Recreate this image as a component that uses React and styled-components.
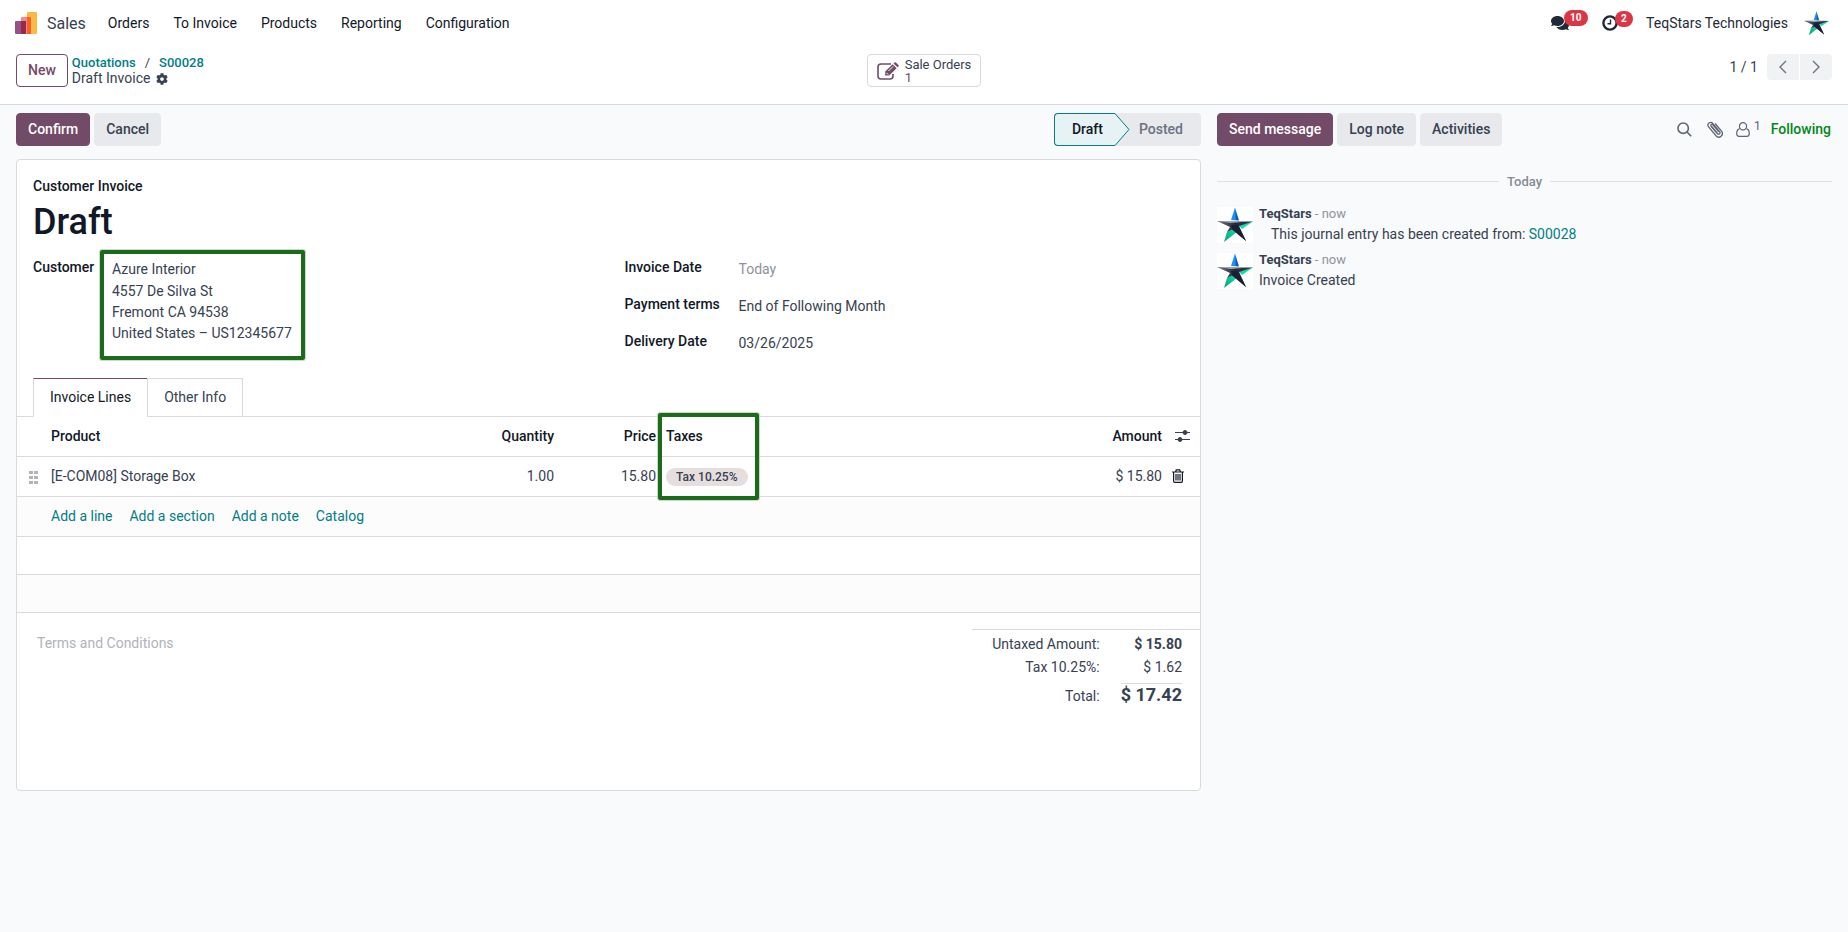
import React from 'react';
import styled, { createGlobalStyle } from 'styled-components';
import { FaCog, FaComments } from 'react-icons/fa';

const GlobalStyle = createGlobalStyle`
  * {
    box-sizing: border-box;
  }

  body {
    margin: 0;
    background-color: #f9fafb;
    color: #374151;
    font-family: Roboto, "Noto Sans", sans-serif;
    font-size: 14px;
    line-height: 21px;
  }

  button, input, textarea {
    font: inherit;
    color: inherit;
  }

  a {
    color: #017e84;
    text-decoration: none;
  }
`;

const Header = styled.header`
  background-color: #fff;
  border-bottom: 1px solid #d8dadd;
`;

const Navbar = styled.nav`
  display: flex;
  align-items: center;
  height: 46px;
  padding: 0 19px 0 15px;
`;

const AppName = styled.a`
  display: flex;
  align-items: center;
  gap: 10px;
  margin-right: 22px;
  font-size: 16px;
  color: #374151;
`;

const Menu = styled.div`
  display: flex;
  gap: 24px;
`;

const MenuItem = styled.a`
  color: #111827;
`;

const Systray = styled.div`
  display: flex;
  align-items: center;
  margin-left: auto;
  color: #1f2937;
`;

const TrayButton = styled.button`
  position: relative;
  display: flex;
  align-items: center;
  margin-right: ${({ space }) => space}px;
  padding: 0;
  border: 0;
  background: none;
`;

const Counter = styled.span`
  position: absolute;
  left: 13px;
  top: -4px;
  min-width: 16px;
  height: 16px;
  padding: 0 6px;
  border-radius: 8px;
  background-color: #dc3545;
  color: #fff;
  font-size: 10px;
  font-weight: 700;
  line-height: 16px;
`;

const Company = styled.span`
  margin-right: 16px;
`;

const ControlPanel = styled.div`
  display: grid;
  grid-template-columns: 1fr auto 1fr;
  align-items: start;
  padding: 8px 16px 17px;
`;

const PanelStart = styled.div`
  display: flex;
  gap: 4px;
`;

const Button = styled.button`
  height: 33px;
  padding: 0 11px;
  border: 1px solid ${({ kind }) => (kind === 'plain' ? '#e7e9ed' : '#714b67')};
  border-radius: 4px;
  background-color: ${({ kind }) => ({ primary: '#714b67', outline: '#fff', plain: '#e7e9ed' }[kind])};
  color: ${({ kind }) => ({ primary: '#fff', outline: '#714b67', plain: '#374151' }[kind])};
  font-weight: 500;
  white-space: nowrap;
`;

const Breadcrumb = styled.div`
  display: flex;
  flex-direction: column;
`;

const Crumbs = styled.div`
  display: flex;
  gap: 9px;
  font-size: 13px;
  line-height: 17px;
  
  a {
    font-weight: 500;
  }
`;

const CurrentCrumb = styled.div`
  display: flex;
  align-items: center;
  gap: 6px;
  line-height: 15px;
`;

const StatButton = styled.button`
  display: flex;
  align-items: center;
  gap: 6px;
  height: 33px;
  padding: 0 9px;
  border: 1px solid #d8dadd;
  border-radius: 4px;
  background-color: #fff;
  text-align: left;
`;

const StatText = styled.span`
  display: flex;
  flex-direction: column;
  font-size: 13px;
  line-height: 13px;
`;

const StatValue = styled.span`
  color: #714b67;
`;

const Pager = styled.div`
  display: flex;
  align-items: center;
  justify-content: flex-end;
  gap: 1px;
`;

const PagerCount = styled.span`
  margin-right: 8px;
`;

const PagerButton = styled.button`
  display: flex;
  align-items: center;
  justify-content: center;
  width: 32px;
  height: 26px;
  padding: 0;
  border: 0;
  border-radius: ${({ side }) => (side === 'left' ? '4px 0 0 4px' : '0 4px 4px 0')};
  background-color: #f1f2f4;
  color: #6b7280;
`;

const Content = styled.div`
  display: grid;
  grid-template-columns: 1185fr 615fr;
  align-items: start;
  gap: 16px;
  padding: 8px 16px;
`;

const Bar = styled.div`
  display: flex;
  align-items: center;
  gap: 4px;
`;

const StatusBar = styled.div`
  display: flex;
  margin-left: auto;
`;

const Status = styled.button`
  position: relative;
  height: 33px;
  padding: 0 18px 0 24px;
  border: 0;
  border-radius: 0 4px 4px 0;
  background-color: #e7e9ed;
  color: #6b7280;
  font-weight: 500;
`;

const ActiveStatus = styled(Status)`
  padding: 0 12px 0 17px;
  border: 1px solid #017e84;
  border-right: 0;
  border-radius: 4px 0 0 4px;
  background-color: #e6f2f3;
  color: #111827;
  z-index: 1;

  svg {
    position: absolute;
    top: -1px;
    left: 100%;
  }
`;

const Sheet = styled.section`
  min-height: 632px;
  margin-top: 13px;
  border: 1px solid #d8dadd;
  border-radius: 4px;
  background-color: #fff;
`;

const SheetTop = styled.div`
  padding: 16px 16px 0;
  color: #111827;
`;

const DocType = styled.div`
  font-weight: 500;
`;

const Title = styled.h1`
  margin: 6px 0 9px;
  font-size: 36px;
  font-weight: 500;
  line-height: 38px;
`;

const Groups = styled.div`
  display: grid;
  grid-template-columns: 1fr 1fr;
  gap: 32px;
`;

const CustomerGroup = styled.div`
  display: flex;
  align-items: flex-start;
`;

const Label = styled.label`
  flex: none;
  width: ${({ size }) => size}px;
  font-weight: 500;
`;

const CustomerLabel = styled(Label)`
  padding-top: 7px;
`;

const Highlight = styled.div`
  width: 205px;
  height: 110px;
  padding: 3px 8px;
  border: 4px solid #1b6b1b;
  border-radius: 2px;
  box-shadow: 0 0 0 1px #c6dcc6;
  color: #374151;
`;

const Field = styled.input`
  flex: 1;
  min-width: 0;
  width: 100%;
  height: 23px;
  padding: 0;
  border: 0;
  background: none;
  color: #374151;

  &::placeholder {
    color: #8e939c;
    opacity: 1;
  }
`;

const Address = styled.div`
  margin-top: 1px;
  white-space: nowrap;
`;

const Details = styled.div`
  display: flex;
  flex-direction: column;
  gap: 14px;
  padding-top: 7px;
`;

const DetailRow = styled.div`
  display: flex;
`;

const Tabs = styled.div`
  display: flex;
  margin-top: 18px;
  padding-left: 16px;
  border-bottom: 1px solid #d8dadd;
`;

const Tab = styled.button`
  height: 39px;
  margin-bottom: -1px;
  margin-left: ${({ active }) => (active ? 0 : -1)}px;
  padding: 0 16px;
  border: 1px solid #d8dadd;
  border-top-color: ${({ active }) => (active ? '#714b67' : '#d8dadd')};
  border-bottom-color: ${({ active }) => (active ? '#fff' : '#d8dadd')};
  background-color: #fff;
  color: ${({ active }) => (active ? '#111827' : '#374151')};
`;

const Lines = styled.table`
  width: 100%;
  table-layout: fixed;
  border-collapse: collapse;
`;

const Column = styled.col`
  width: ${({ size }) => size};
`;

const HeadCell = styled.th`
  position: relative;
  height: 39px;
  padding: 0 5px;
  border-bottom: 1px solid #d8dadd;
  color: #111827;
  font-weight: 500;
  text-align: ${({ align }) => align || 'left'};
`;

// frame laid over the header and the first line of the column
const TaxFrame = styled.span`
  position: absolute;
  top: -4px;
  left: -3px;
  z-index: 1;
  width: 101px;
  height: 87px;
  border: 4px solid #1b6b1b;
  border-radius: 2px;
  box-shadow: 0 0 0 1px #c6dcc6;
  pointer-events: none;
`;

const Cell = styled.td`
  height: ${({ empty }) => (empty ? 38 : 40)}px;
  padding: 0 5px;
  border-bottom: 1px solid #d8dadd;
  background-color: ${({ shaded }) => (shaded ? '#fcfcfc' : '#fff')};
  text-align: ${({ align }) => align || 'left'};
`;

const HandleCell = styled(Cell)`
  padding: 2px 8px 0 12px;

  svg {
    display: block;
  }
`;

const Tag = styled.span`
  display: inline-block;
  padding: 0 10px;
  border-radius: 9px;
  background-color: #e6dedd;
  font-size: 12px;
  font-weight: 500;
  line-height: 18px;
`;

const IconButton = styled.button`
  display: flex;
  padding: 0;
  border: 0;
  background: none;
  color: ${({ tone }) => tone || '#374151'};
`;

const OptionsCell = styled(HeadCell)`
  padding: 0 8px;
`;

const AddLinks = styled.div`
  display: flex;
  gap: 17px;
`;

const SheetBottom = styled.div`
  display: flex;
  justify-content: space-between;
  padding-top: 16px;
`;

const Terms = styled.textarea`
  width: 50%;
  height: 42px;
  margin: 4px 0 0 20px;
  padding: 0;
  border: 0;
  background: none;
  resize: none;

  &::placeholder {
    color: #afb3ba;
    opacity: 1;
  }
`;

const TotalsBox = styled.div`
  display: flex;
  justify-content: flex-end;
  width: 228px;
  padding: 4px 18px 0 0;
  border-top: 1px solid #d8dadd;
`;

const Totals = styled.table`
  border-collapse: collapse;

  th, td {
    height: 23px;
    padding: 0;
    text-align: right;
    vertical-align: baseline;
  }

  th {
    padding-right: 21px;
    font-weight: 400;
  }
`;

const Amount = styled.td`
  font-weight: ${({ bold }) => (bold ? 700 : 400)};
`;

const TotalAmount = styled.span`
  display: block;
  margin-top: 3px;
  border-top: 1px solid #d8dadd;
  font-size: 18px;
  font-weight: 700;
`;

const ChatterTools = styled.div`
  display: flex;
  align-items: center;
  margin-left: auto;
`;

const ToolButton = styled(IconButton)`
  margin-right: ${({ space }) => space}px;
  color: #5f6673;
`;

const Followers = styled.sup`
  margin-left: 4px;
  font-size: 12px;
  line-height: 8px;
`;

const Following = styled.button`
  padding: 0 1px;
  border: 0;
  background: none;
  color: #008818;
  font-weight: 500;
`;

const DateDivider = styled.div`
  display: flex;
  align-items: center;
  gap: 8px;
  margin: 25px 0 13px;
  color: #848a94;
  font-size: 13px;
  font-weight: 500;

  &::before, &::after {
    content: '';
    flex: 1;
    border-top: 1px solid #dee0e3;
  }
`;

const Message = styled.article`
  display: flex;
  gap: 6px;
  height: 46px;
`;

const Avatar = styled.div`
  width: 36px;
  height: 36px;
  margin-top: 2px;
  background-color: #fff;
`;

const MessageHead = styled.div`
  color: #8e939c;
  font-size: 13px;
  line-height: 17px;

  strong {
    color: #374151;
  }
`;

const MessageBody = styled.div`
  padding-left: ${({ indent }) => (indent ? 12 : 0)}px;
  line-height: 25px;
`;

const SalesLogo = () => (
    <svg width="22" height="22" viewBox="0 0 22 22">
        <rect x="0" y="9" width="11" height="13" rx="1" fill="#985184" />
        <rect x="6" y="5" width="10" height="17" rx="1" fill="#fc868b" />
        <rect x="12" y="0" width="10" height="22" rx="1" fill="#fbb945" />
        <path d="M6 9h5v13H7a1 1 0 0 1-1-1z" fill="#962b48" />
        <path d="M12 5h3a1 1 0 0 1 1 1v15a1 1 0 0 1-1 1h-3z" fill="#f86126" />
    </svg>
);

const Star = ({ size }) => (
    <svg width={size} height={size} viewBox="0 0 36 36">
        <defs>
            <linearGradient id="spike" x1="0" x2="1">
                <stop offset="0.45" stopColor="#1c91f8" />
                <stop offset="0.7" stopColor="#0b58b4" />
            </linearGradient>
            <linearGradient id="band" x1="0" x2="1">
                <stop offset="0" stopColor="#777985" />
                <stop offset="0.5" stopColor="#25263a" />
                <stop offset="1" stopColor="#3c3d50" />
            </linearGradient>
            <linearGradient id="leg" x1="0" y1="1" x2="1" y2="0">
                <stop offset="0" stopColor="#0b9d7c" />
                <stop offset="1" stopColor="#12e8ad" />
            </linearGradient>
        </defs>
        <path d="M18 0.5 22 13.5 14 13z" fill="url(#spike)" />
        <path d="M36 14.5 25 22 21 18z" fill="#12dfa6" />
        <path d="M17 20 20 25 7 35 10 25z" fill="url(#leg)" />
        <path d="M0 14 36 14.5 22 19 29 34 15 22.5 10 25 13 20z" fill="url(#band)" />
        <path d="M0 14H36L14 16z" fill="#a2a3ab" />
        <path d="M14 18 21 18 29 34 15 22z" fill="#1d1e33" />
    </svg>
);

const ClockIcon = () => (
    <svg width="16" height="16" viewBox="0 0 16 16" fill="none" stroke="currentColor">
        <circle cx="8" cy="8" r="6.6" strokeWidth="2.4" />
        <path d="M8.5 4.5v4.3H5.5" strokeWidth="1.4" />
    </svg>
);

const EditIcon = () => (
    <svg width="22" height="18" viewBox="0 0 22 18" fill="none" stroke="#714b67">
        <path d="M14 2H4a3 3 0 0 0-3 3v9a3 3 0 0 0 3 3h9a3 3 0 0 0 3-3v-2" strokeWidth="1.6" />
        <path d="M8.2 13.6v-4L15.6 2.2l4 4-7.4 7.4z" fill="#714b67" stroke="none" />
        <path d="M16.5 1.4 17.500.5a1 1 0 0 1 1.4 0l2.5 2.5a1 1 0 0 1 0 1.4l-.9.9z" fill="#714b67" stroke="none" />
        <path d="M9.4 10.8l1.7 1.7M11.5 9l4.5-4.5" stroke="#fff" strokeWidth="1" />
    </svg>
);

const Chevron = ({ d }) => (
    <svg width="10" height="16" viewBox="0 0 10 16" fill="none" stroke="currentColor" strokeWidth="1.4">
        <path d={d} />
    </svg>
);

const SearchIcon = () => (
    <svg width="15" height="15" viewBox="0 0 15 15" fill="none" stroke="currentColor" strokeWidth="1.6">
        <circle cx="6.2" cy="6.2" r="5.2" />
        <path d="M10 10l4.2 4.2" />
    </svg>
);

const ClipIcon = () => (
    <svg width="16" height="17" viewBox="0 0 16 17" fill="none" stroke="currentColor" strokeWidth="1.3" strokeLinecap="round">
        <path d="M4.5 5.5l6 7.2a1.4 1.4 0 0 0 2.2-1.8L5.8 2.5a2.7 2.7 0 0 0-4.2 3.4l7.6 9.1a3.6 3.6 0 0 0 5.5-4.6L8.5 3" />
        <path d="M10.5 12.7L4 5a1 1 0 0 1 1.7-1.3l5.5 6.5" />
    </svg>
);

const UserIcon = () => (
    <svg width="14" height="15" viewBox="0 0 14 15" fill="none" stroke="currentColor" strokeWidth="1.2">
        <circle cx="7" cy="4.3" r="3.6" />
        <path d="M3.7 6.6C1.5 7.2.7 9 .7 11.5c0 1.7.8 2.8 2.3 2.8h8c1.5 0 2.3-1.1 2.3-2.8 0-2.5-.8-4.3-3-4.9" />
    </svg>
);

const SlidersIcon = () => (
    <svg width="15" height="12" viewBox="0 0 15 12" stroke="currentColor" fill="currentColor">
        <path d="M0 2.5h15M0 9.5h15" strokeWidth="1.2" />
        <circle cx="10" cy="2.5" r="2" />
        <circle cx="5" cy="9.5" r="2" />
    </svg>
);

const TrashIcon = () => (
    <svg width="12" height="14" viewBox="0 0 12 14" fill="none" stroke="currentColor" strokeWidth="1.2">
        <path d="M0 3h12M3.5 3l.8-2.2h3.4L8.5 3M1.6 3v9c0 .9.5 1.4 1.2 1.4h6.4c.7 0 1.2-.5 1.2-1.4V3M4 5v6.5M6 5v6.5M8 5v6.5" />
    </svg>
);

const HandleIcon = () => (
    <svg width="9" height="13" viewBox="0 0 9 13" fill="#b0b4ba">
        {[0, 5, 10].map(y => (
            <path key={y} d={`M0 ${y}h4v3h-4zM5 ${y}h4v3h-4z`} />
        ))}
    </svg>
);

const menu = ['Orders', 'To Invoice', 'Products', 'Reporting', 'Configuration'];

const details = [
    { id: 'invoice-date', label: 'Invoice Date', placeholder: 'Today' },
    { id: 'payment-terms', label: 'Payment terms', value: 'End of Following Month' },
    { id: 'delivery-date', label: 'Delivery Date', value: '03/26/2025' },
];

const messages = [
    { id: 1, text: 'This journal entry has been created from: ', link: 'S00028' },
    { id: 2, text: 'Invoice Created' },
];

const TopBar = () => (
    <Navbar>
        <AppName href="#"><SalesLogo />Sales</AppName>
        <Menu>
            {menu.map(item => <MenuItem key={item} href="#">{item}</MenuItem>)}
        </Menu>
        <Systray>
            <TrayButton space={33} aria-label="Messages"><FaComments size={18} /><Counter>10</Counter></TrayButton>
            <TrayButton space={28} aria-label="Clock"><ClockIcon /><Counter>2</Counter></TrayButton>
            <Company>TeqStars Technologies</Company>
            <Star size={25} />
        </Systray>
    </Navbar>
);

const Panel = () => (
    <ControlPanel>
        <PanelStart>
            <Button kind="outline">New</Button>
            <Breadcrumb>
                <Crumbs>
                    <a href="#">Quotations</a>
                    <span>/</span>
                    <a href="#">S00028</a>
                </Crumbs>
                <CurrentCrumb>Draft Invoice <FaCog size={12} /></CurrentCrumb>
            </Breadcrumb>
        </PanelStart>
        <StatButton>
            <EditIcon />
            <StatText>Sale Orders<StatValue>1</StatValue></StatText>
        </StatButton>
        <Pager>
            <PagerCount>1 / 1</PagerCount>
            <PagerButton side="left" aria-label="Previous"><Chevron d="M8 2L2 8l6 6" /></PagerButton>
            <PagerButton side="right" aria-label="Next"><Chevron d="M2 2l6 6-6 6" /></PagerButton>
        </Pager>
    </ControlPanel>
);

const InvoiceLines = () => (
    <Lines>
        <colgroup>
            <Column size="29px" />
            <Column size="35%" />
            <Column size="99px" />
            <Column size="102px" />
            <Column />
            <Column size="130px" />
            <Column size="33px" />
        </colgroup>
        <thead>
            <tr>
                <HeadCell />
                <HeadCell>Product</HeadCell>
                <HeadCell align="right">Quantity</HeadCell>
                <HeadCell align="right">Price</HeadCell>
                <HeadCell>Taxes<TaxFrame /></HeadCell>
                <HeadCell align="right">Amount</HeadCell>
                <OptionsCell><IconButton aria-label="Columns"><SlidersIcon /></IconButton></OptionsCell>
            </tr>
        </thead>
        <tbody>
            <tr>
                <HandleCell><HandleIcon /></HandleCell>
                <Cell>[E-COM08] Storage Box</Cell>
                <Cell align="right">1.00</Cell>
                <Cell align="right">15.80</Cell>
                <Cell><Tag>Tax 10.25%</Tag></Cell>
                <Cell align="right">$ 15.80</Cell>
                <Cell><IconButton tone="#111827" aria-label="Delete"><TrashIcon /></IconButton></Cell>
            </tr>
            <tr>
                <Cell shaded />
                <Cell shaded colSpan={6}>
                    <AddLinks>
                        <a href="#">Add a line</a>
                        <a href="#">Add a section</a>
                        <a href="#">Add a note</a>
                        <a href="#">Catalog</a>
                    </AddLinks>
                </Cell>
            </tr>
            <tr><Cell empty colSpan={7} /></tr>
            <tr><Cell empty shaded colSpan={7} /></tr>
        </tbody>
    </Lines>
);

const Invoice = () => (
    <main>
        <Bar>
            <Button kind="primary">Confirm</Button>
            <Button kind="plain">Cancel</Button>
            <StatusBar>
                <ActiveStatus>
                    Draft
                    <svg width="15" height="33" viewBox="0 0 15 33">
                        <path d="M0 .5 14 16.5 0 32.5" fill="#e6f2f3" stroke="#017e84" />
                    </svg>
                </ActiveStatus>
                <Status>Posted</Status>
            </StatusBar>
        </Bar>
        <Sheet>
            <SheetTop>
                <DocType>Customer Invoice</DocType>
                <Title>Draft</Title>
                <Groups>
                    <CustomerGroup>
                        <CustomerLabel size={67} htmlFor="customer">Customer</CustomerLabel>
                        <Highlight>
                            <Field id="customer" defaultValue="Azure Interior" />
                            <Address>
                                4557 De Silva St<br />
                                Fremont CA 94538<br />
                                United States – US12345677
                            </Address>
                        </Highlight>
                    </CustomerGroup>
                    <Details>
                        {details.map(item => (
                            <DetailRow key={item.id}>
                                <Label size={114} htmlFor={item.id}>{item.label}</Label>
                                <Field id={item.id} placeholder={item.placeholder} defaultValue={item.value} />
                            </DetailRow>
                        ))}
                    </Details>
                </Groups>
            </SheetTop>
            <Tabs role="tablist">
                <Tab role="tab" active={1} aria-selected="true">Invoice Lines</Tab>
                <Tab role="tab" aria-selected="false">Other Info</Tab>
            </Tabs>
            <InvoiceLines />
            <SheetBottom>
                <Terms aria-label="Terms" placeholder="Terms and Conditions" />
                <TotalsBox>
                    <Totals>
                        <tbody>
                            <tr><th>Untaxed Amount:</th><Amount bold>$ 15.80</Amount></tr>
                            <tr><th>Tax 10.25%:</th><Amount>$ 1.62</Amount></tr>
                            <tr><th>Total:</th><Amount><TotalAmount>$ 17.42</TotalAmount></Amount></tr>
                        </tbody>
                    </Totals>
                </TotalsBox>
            </SheetBottom>
        </Sheet>
    </main>
);

const Chatter = () => (
    <aside>
        <Bar>
            <Button kind="primary">Send message</Button>
            <Button kind="plain">Log note</Button>
            <Button kind="plain">Activities</Button>
            <ChatterTools>
                <ToolButton space={15} aria-label="Search"><SearchIcon /></ToolButton>
                <ToolButton space={13} aria-label="Attach"><ClipIcon /></ToolButton>
                <ToolButton space={9} aria-label="Followers"><UserIcon /><Followers>1</Followers></ToolButton>
                <Following>Following</Following>
            </ChatterTools>
        </Bar>
        <DateDivider>Today</DateDivider>
        {messages.map(item => (
            <Message key={item.id}>
                <Avatar><Star size={36} /></Avatar>
                <div>
                    <MessageHead><strong>TeqStars</strong> - now</MessageHead>
                    <MessageBody indent={item.link}>
                        {item.text}{item.link && <a href="#">{item.link}</a>}
                    </MessageBody>
                </div>
            </Message>
        ))}
    </aside>
);

const App = () => (
    <>
        <GlobalStyle />
        <Header>
            <TopBar />
            <Panel />
        </Header>
        <Content>
            <Invoice />
            <Chatter />
        </Content>
    </>
);

export default App;
